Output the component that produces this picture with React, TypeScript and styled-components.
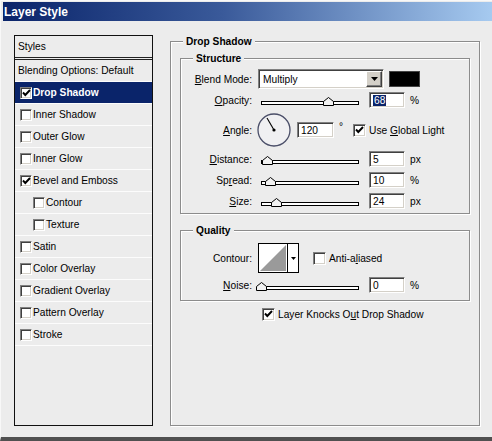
import React from 'react';
import styled, { createGlobalStyle, css } from 'styled-components';

const Global = createGlobalStyle`
  html, body { margin: 0; padding: 0; background: #ececec; }
  body { font-family: 'Liberation Sans', Arial, sans-serif; font-size: 10.2px; color: #000; }
  * { box-sizing: border-box; }
`;

const sunken = css`
  border: 1px solid;
  border-color: #808080 #ffffff #ffffff #808080;
  box-shadow: inset 1px 1px 0 #404040, inset -1px -1px 0 #d4d0c8;
`;

const raised = css`
  border: 1px solid;
  border-color: #ffffff #404040 #404040 #ffffff;
  box-shadow: inset -1px -1px 0 #808080;
`;

const Window = styled.div`
  width: 492px;
  height: 441px;
  background: #ececec;
  border-top: 1px solid #f8f8f8;
  border-left: 1px solid #f8f8f8;
  border-bottom: 4px solid #505050;
  padding: 1px 0 0 2px;
  display: flex;
  flex-direction: column;
  overflow: hidden;
`;

const TitleBar = styled.div`
  height: 19px;
  flex-shrink: 0;
  display: flex;
  align-items: center;
  padding-left: 1px;
  background: linear-gradient(to right, #0a246a 0%, #3a5a9a 45%, #a6caf0 100%);
  color: #fff;
  font-weight: bold;
  font-size: 12px;
`;

const Body = styled.div`
  display: flex;
  align-items: flex-start;
  padding: 14px 0 0 11px;
`;

const StylesPanel = styled.div`
  width: 139px;
  height: 391px;
  border: 1px solid #111;
  display: flex;
  flex-direction: column;
  flex-shrink: 0;
`;

const StylesHeader = styled.div`
  height: 24px;
  border-bottom: 3px double #222;
  display: flex;
  align-items: center;
  padding-left: 3px;
`;

const ListRow = styled.div<{ $indent: number; $selected?: boolean }>`
  height: 22px;
  border-bottom: 1px solid #fcfcfc;
  display: flex;
  align-items: center;
  padding-left: ${(p) => p.$indent}px;
  gap: 1px;
  background: ${(p) => (p.$selected ? '#0a246a' : 'transparent')};
  color: ${(p) => (p.$selected ? '#fff' : '#000')};
  font-weight: ${(p) => (p.$selected ? 'bold' : 'normal')};
`;

const Box = styled.span<{ $size: number }>`
  ${sunken};
  width: ${(p) => p.$size}px;
  height: ${(p) => p.$size}px;
  background: #fff;
  display: inline-flex;
  align-items: center;
  justify-content: center;
  flex-shrink: 0;
`;

const CheckBox = ({ checked, size = 13 }: { checked?: boolean; size?: number }) => (
  <Box $size={size}>
    {checked && (
      <svg width="9" height="8" viewBox="0 0 9 8">
        <polyline points="1,3.5 3.3,6 8,1" fill="none" stroke="#000" strokeWidth="1.9" />
      </svg>
    )}
  </Box>
);

const GroupBox = styled.div<{ $w: number; $h: number; $top?: number; $pt: number }>`
  position: relative;
  width: ${(p) => p.$w}px;
  height: ${(p) => p.$h}px;
  margin-top: ${(p) => p.$top ?? 0}px;
  padding-top: ${(p) => p.$pt}px;
  border: 1px solid #8c8c8c;
  box-shadow: 1px 1px 0 #ffffff, inset 1px 1px 0 #ffffff;
  display: flex;
  flex-direction: column;
  flex-shrink: 0;
`;

const GroupTitle = styled.div`
  position: absolute;
  top: -7px;
  left: 12px;
  padding: 0 3px;
  background: #ececec;
  font-weight: bold;
  line-height: 13px;
`;

const DropGroup = styled(GroupBox)`
  margin-left: 17px;
  padding-left: 9px;
  margin-top: 6px;
`;

const FormRow = styled.div<{ $h: number; $mt: number }>`
  display: flex;
  align-items: center;
  height: ${(p) => p.$h}px;
  margin-top: ${(p) => p.$mt}px;
  flex-shrink: 0;
`;

const Label = styled.span`
  width: 71px;
  text-align: right;
  margin-right: 6px;
  flex-shrink: 0;
`;

const Select = styled.div`
  ${sunken};
  width: 126px;
  height: 20px;
  background: #fff;
  padding: 1px;
  display: flex;
  align-items: center;
`;

const SelectText = styled.span`
  flex: 1;
  padding-left: 3px;
`;

const DropButton = styled.span`
  ${raised};
  width: 16px;
  height: 16px;
  background: #d4d0c8;
  display: flex;
  align-items: center;
  justify-content: center;
`;

const Swatch = styled.span`
  width: 31px;
  height: 16px;
  margin-left: 5px;
  background: #000;
  border: 1px solid #444;
`;

const SliderWrap = styled.div`
  position: relative;
  width: 101px;
  height: 18px;
  flex-shrink: 0;
`;

const Track = styled.div`
  margin: 10px 0 0 3px;
  width: 98px;
  height: 4px;
  border: 1px solid #000;
  background: #fff;
`;

const Thumb = styled.svg`
  position: absolute;
  top: 6px;
`;

const Slider = ({ pos }: { pos: number }) => (
  <SliderWrap>
    <Track />
    <Thumb width="11" height="9" viewBox="0 0 11 9" style={{ left: 3 + pos - 5 }}>
      <polygon points="0.5,8.5 0.5,4.5 5.5,0.5 10.5,4.5 10.5,8.5" fill="#f2f2f2" stroke="#000" strokeWidth="1" />
    </Thumb>
  </SliderWrap>
);

const NumInput = styled.div<{ $w: number; $ml: number }>`
  ${sunken};
  width: ${(p) => p.$w}px;
  height: 16px;
  margin-left: ${(p) => p.$ml}px;
  background: #fff;
  display: flex;
  align-items: center;
  padding-left: 3px;
  flex-shrink: 0;
`;

const Highlight = styled.span`
  background: #0a246a;
  color: #fff;
  padding: 0 1px;
  line-height: 11px;
`;

const Unit = styled.span`
  margin-left: 5px;
`;

const Degree = styled.span`
  margin-left: 5px;
  align-self: flex-start;
  margin-top: 10px;
`;

const CheckLabel = styled.span<{ $ml: number }>`
  display: flex;
  align-items: center;
  gap: 3px;
  margin-left: ${(p) => p.$ml}px;
`;

const Dial = styled.svg`
  margin-left: -1px;
  flex-shrink: 0;
`;

const ContourPicker = styled.div`
  width: 41px;
  height: 30px;
  border: 1px solid #000;
  display: flex;
  background: #fff;
  flex-shrink: 0;
`;

const ContourArrow = styled.span`
  width: 11px;
  border-left: 1px solid #000;
  display: flex;
  align-items: center;
  justify-content: center;
`;

const KnockRow = styled(FormRow)`
  margin-left: 82px;
`;

const DownTri = ({ w = 7, h = 4 }: { w?: number; h?: number }) => (
  <svg width={w} height={h} viewBox={`0 0 ${w} ${h}`}>
    <polygon points={`0,0 ${w},0 ${w / 2},${h}`} fill="#000" />
  </svg>
);

type StyleItem = { name: string; checked?: boolean; sub?: boolean; selected?: boolean };

const items: StyleItem[] = [
  { name: 'Drop Shadow', checked: true, selected: true },
  { name: 'Inner Shadow' },
  { name: 'Outer Glow' },
  { name: 'Inner Glow' },
  { name: 'Bevel and Emboss', checked: true },
  { name: 'Contour', sub: true },
  { name: 'Texture', sub: true },
  { name: 'Satin' },
  { name: 'Color Overlay' },
  { name: 'Gradient Overlay' },
  { name: 'Pattern Overlay' },
  { name: 'Stroke' },
];

type SliderRow = { label: React.ReactNode; pos: number; value: string; unit: string; mt: number };

const sliderRows: SliderRow[] = [
  { label: <><u>D</u>istance:</>, pos: 6, value: '5', unit: 'px', mt: 1 },
  { label: <>Sp<u>r</u>ead:</>, pos: 9, value: '10', unit: '%', mt: 3 },
  { label: <><u>S</u>ize:</>, pos: 15, value: '24', unit: 'px', mt: 3 },
];

export default function App() {
  return (
    <>
      <Global />
      <Window>
        <TitleBar>Layer Style</TitleBar>
        <Body>
          <StylesPanel>
            <StylesHeader>Styles</StylesHeader>
            <ListRow $indent={3}>Blending Options: Default</ListRow>
            {items.map((it) => (
              <ListRow key={it.name} $indent={it.sub ? 18 : 5} $selected={it.selected}>
                <CheckBox checked={it.checked} size={12} />
                <span>{it.name}</span>
              </ListRow>
            ))}
          </StylesPanel>

          <DropGroup $w={310} $h={385} $pt={16}>
            <GroupTitle>Drop Shadow</GroupTitle>

            <GroupBox $w={290} $h={156} $pt={10}>
              <GroupTitle>Structure</GroupTitle>
              <FormRow $h={20} $mt={0}>
                <Label><u>B</u>lend Mode:</Label>
                <Select>
                  <SelectText>Multiply</SelectText>
                  <DropButton><DownTri /></DropButton>
                </Select>
                <Swatch />
              </FormRow>
              <FormRow $h={18} $mt={2}>
                <Label><u>O</u>pacity:</Label>
                <Slider pos={67} />
                <NumInput $w={36} $ml={10}><Highlight>68</Highlight></NumInput>
                <Unit>%</Unit>
              </FormRow>
              <FormRow $h={38} $mt={2}>
                <Label><u>A</u>ngle:</Label>
                <Dial width="34" height="34" viewBox="0 0 34 34">
                  <circle cx="17" cy="17" r="16" fill="#f0f0f2" stroke="#4a4e68" strokeWidth="1.3" />
                  <line x1="17" y1="17" x2="10" y2="5" stroke="#000" strokeWidth="1.1" />
                  <circle cx="17" cy="17" r="1.6" fill="#000" />
                </Dial>
                <NumInput $w={37} $ml={6}>120</NumInput>
                <Degree>°</Degree>
                <CheckLabel $ml={10}>
                  <CheckBox checked />
                  <span>Use <u>G</u>lobal Light</span>
                </CheckLabel>
              </FormRow>
              {sliderRows.map((r, i) => (
                <FormRow key={i} $h={18} $mt={r.mt}>
                  <Label>{r.label}</Label>
                  <Slider pos={r.pos} />
                  <NumInput $w={36} $ml={10}>{r.value}</NumInput>
                  <Unit>{r.unit}</Unit>
                </FormRow>
              ))}
            </GroupBox>

            <GroupBox $w={290} $h={71} $top={16} $pt={12}>
              <GroupTitle>Quality</GroupTitle>
              <FormRow $h={30} $mt={0}>
                <Label>Contour:</Label>
                <ContourPicker>
                  <svg width="28" height="28" viewBox="0 0 28 28">
                    <rect x="0" y="0" width="28" height="28" fill="#fff" />
                    <polygon points="1,27 27,1 27,27" fill="#9a9a9a" />
                  </svg>
                  <ContourArrow><DownTri w={5} h={3} /></ContourArrow>
                </ContourPicker>
                <CheckLabel $ml={14}>
                  <CheckBox />
                  <span>Anti-a<u>l</u>iased</span>
                </CheckLabel>
              </FormRow>
              <FormRow $h={18} $mt={3}>
                <Label><u>N</u>oise:</Label>
                <Slider pos={0} />
                <NumInput $w={36} $ml={10}>0</NumInput>
                <Unit>%</Unit>
              </FormRow>
            </GroupBox>

            <KnockRow $h={14} $mt={6}>
              <CheckLabel $ml={0}>
                <CheckBox checked />
                <span>Layer Knocks O<u>u</u>t Drop Shadow</span>
              </CheckLabel>
            </KnockRow>
          </DropGroup>
        </Body>
      </Window>
    </>
  );
}
